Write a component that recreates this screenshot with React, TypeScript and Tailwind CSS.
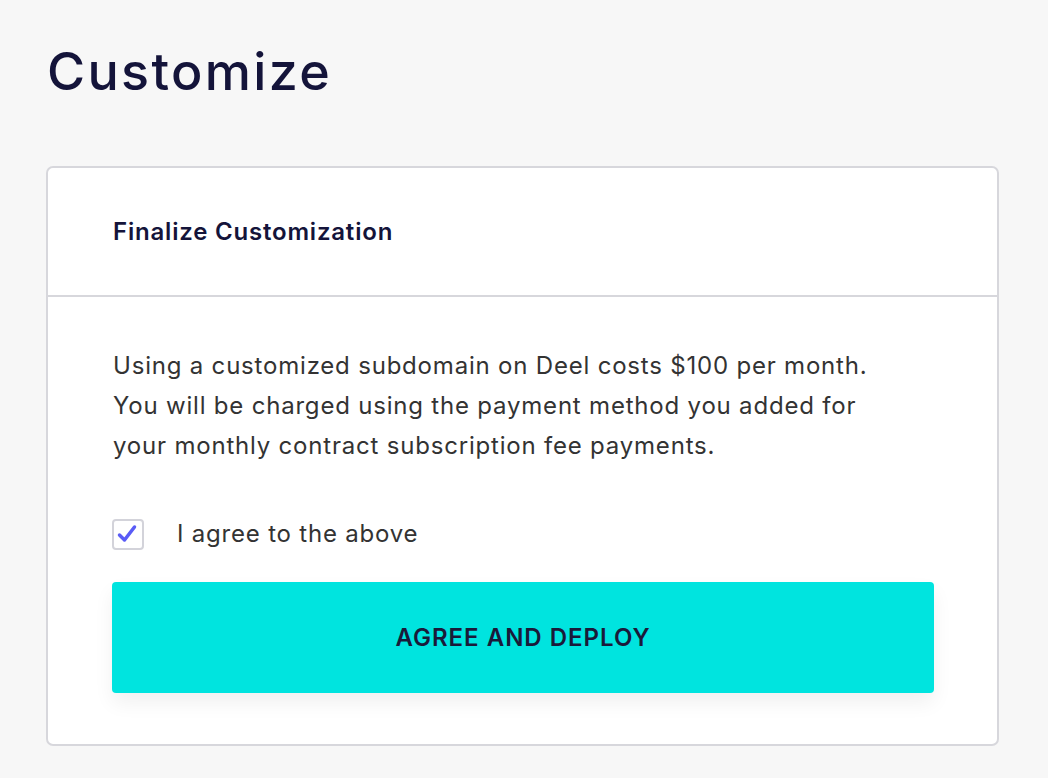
import { useState } from 'react'

export default function App() {
  const [agreed, setAgreed] = useState(true)

  return (
    <div
      className="min-h-screen bg-[#f7f7f7] pl-[46px] pr-[49px] pt-[36px] pb-8 tracking-[0.05em]"
      style={{ fontFamily: 'Inter, "Noto Sans", sans-serif' }}
    >
      <h1 className="text-[52px] leading-[72px] font-medium text-[#14143a] mb-[58px] pl-[1px] tracking-[0.045em]">
        Customize
      </h1>

      <div className="bg-white border-2 border-[#d7d7dc] rounded-[7px]">
        {/* Header */}
        <div className="h-[129px] flex items-center px-[65px] border-b-2 border-[#d7d7dc]">
          <h2 className="text-[24px] font-semibold text-[#14143a]">Finalize Customization</h2>
        </div>

        {/* Body */}
        <div className="pl-[64px] pr-[63px] pt-[49px] pb-[51px]">
          <p className="text-[24px] leading-[40px] text-[#333333] max-w-[800px] pl-[1px]">
            Using a customized subdomain on Deel costs $100 per month. You will be charged using the payment method
            you added for your monthly contract subscription fee payments.
          </p>

          <label className="flex items-center gap-[33px] mt-[50px] cursor-pointer">
            <button
              type="button"
              onClick={() => setAgreed(!agreed)}
              className="w-[32px] h-[31px] rounded-[4px] border-2 border-[#d3d3da] bg-white flex items-center justify-center"
            >
              {agreed && (
                <svg width="22" height="22" viewBox="0 0 22 22" fill="none" className="-ml-[2px]">
                  <path
                    d="M3.5 12l5 5 10-13"
                    stroke="#5a5cf6"
                    strokeWidth="3.5"
                    strokeLinecap="round"
                    strokeLinejoin="round"
                  />
                </svg>
              )}
            </button>
            <span className="text-[24px] text-[#333333]">I agree to the above</span>
          </label>

          <button
            type="button"
            className="mt-[30px] w-full h-[111px] rounded-[4px] bg-[#00e4df] text-[#1a1a3a] text-[24px] font-semibold tracking-[1px] shadow-[0_10px_20px_rgba(0,0,0,0.06)]"
          >
            AGREE AND DEPLOY
          </button>
        </div>
      </div>
    </div>
  )
}
